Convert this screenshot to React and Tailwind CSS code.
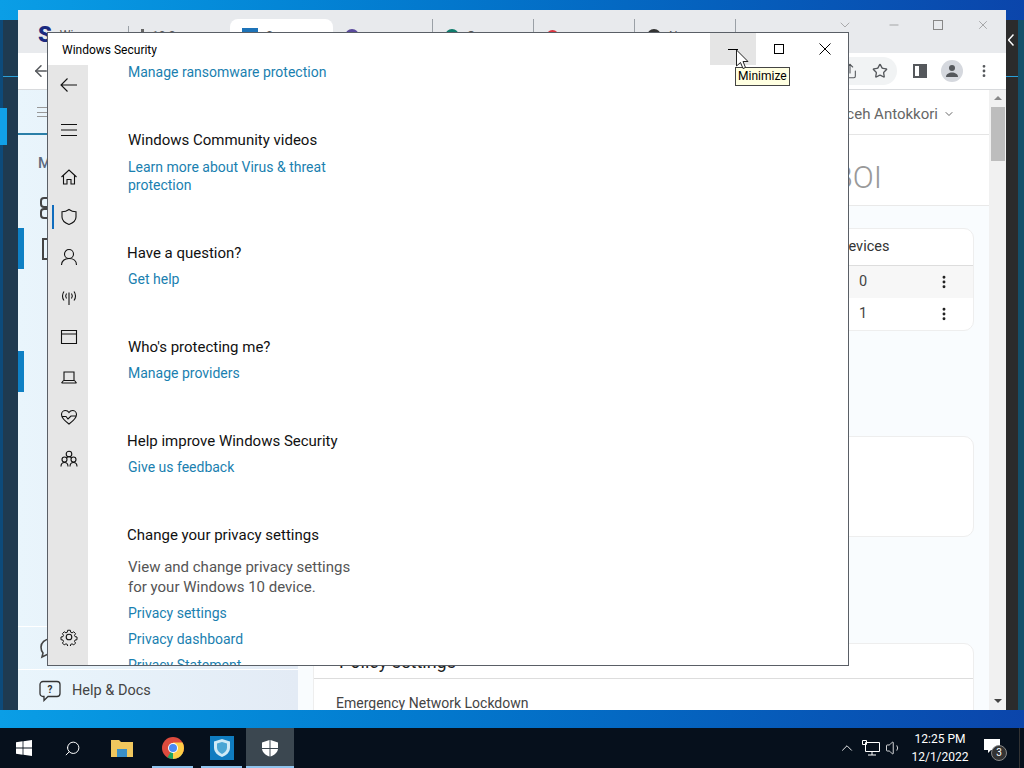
import React from 'react';
import { ArrowLeft, Search, Star, ChevronDown, EllipsisVertical, ChevronUp, X, Minus, Volume1, Share } from 'lucide-react';

const font = { fontFamily: 'Roboto, "Noto Sans", sans-serif' };

const Section = ({ title, children, className = '' }) => (
  <div className={className}>
    <div className="text-[15px] leading-[20px] text-[#111]">{title}</div>
    <div className="pt-[7px]">{children}</div>
  </div>
);

const LinkText = ({ children, className = '' }) => (
  <div className={`text-[14px] leading-[18px] text-[#1a7fb0] ${className}`}>{children}</div>
);

const NavIcon = ({ children, className = '' }) => (
  <div className={`relative flex h-[40px] w-full items-center justify-center pl-px ${className}`}>
    <svg width="18" height="18" viewBox="0 0 18 18" fill="none" stroke="#111" strokeWidth="1.1">{children}</svg>
  </div>
);

const SecurityNav = () => (
  <div className="flex w-[40px] shrink-0 flex-col bg-[#e6e6e6]">
    <NavIcon><path d="M17 9H1M7.500 2.500 1 9l6.500 6.500" /></NavIcon>
    <NavIcon className="mt-[5px]"><path d="M1 3.500H17M1 9H17M1 14.500H17" /></NavIcon>
    <NavIcon className="mt-[7px]"><path d="M1.500 9 9 2l7.500 7M3.500 7.500V16H7v-4.500h4V16h3.500V7.500" /></NavIcon>
    <div className="relative">
      <div className="absolute left-[4px] top-[8px] h-[24px] w-[2px] bg-[#0f6cbd]" />
      <NavIcon><path d="M9 1.500c2 1.500 4.500 2.300 7 2.300v5.200c0 3.500-3 6-7 7.500-4-1.500-7-4-7-7.500V3.800c2.500 0 5-.8 7-2.300z" /></NavIcon>
    </div>
    <NavIcon><circle cx="9" cy="6" r="4.500" /><path d="M1.500 17c0-4 3-6.500 7.500-6.500s7.500 2.500 7.500 6.500" /></NavIcon>
    <NavIcon><path d="M9 4.500V17M6.500 5.500c-1 1.500-1 3.500 0 5M11.500 5.500c1 1.500 1 3.500 0 5M4 3.500c-2 2.500-2 6.500 0 9M14 3.500c2 2.500 2 6.500 0 9" /></NavIcon>
    <NavIcon><path d="M1.500 2.500H16.500V15.500H1.500zM1.500 6H16.500" /></NavIcon>
    <NavIcon><path d="M4 4H14V12.500H4zM1.500 15H16.500M3.500 12.500 1.500 15M14.500 12.500l2 2.500" /></NavIcon>
    <NavIcon><path d="M9 16C5 13 1.500 10.500 1.500 6.500 1.500 4 3.500 2.500 5.500 2.500 7 2.500 8.200 3.300 9 4.500c.8-1.200 2-2 3.500-2 2 0 4 1.500 4 4 0 4-3.500 6.500-7.500 9.500zM2 8.500h4l2 2.500 3-3h5" /></NavIcon>
    <NavIcon className="mt-[2px]"><circle cx="9" cy="4" r="2.800" /><circle cx="4.500" cy="9.500" r="2.500" /><circle cx="13.500" cy="9.500" r="2.500" /><path d="M1 16.500c0-2.500 1.500-4 3.500-4s3.500 1.500 3.500 4M10 16.500c0-2.500 1.500-4 3.500-4s3.500 1.500 3.500 4M6.500 8c.6-.8 1.500-1.200 2.500-1.200s1.900.4 2.500 1.200" /></NavIcon>
    <NavIcon className="mb-[8px] mt-auto">
      <circle cx="9" cy="9" r="2.800" />
      <path d="M7.500 1.500h3l.4 2.200 1.500.7 1.900-1.200 2 2.100-1.200 1.800.6 1.500 2.200.4v3l-2.200.4-.6 1.500 1.200 1.800-2 2.100-1.900-1.200-1.500.6-.4 2.300h-3l-.4-2.300-1.500-.6-1.900 1.200-2-2.100 1.200-1.800-.6-1.500-2.200-.4v-3l2.200-.4.6-1.500-1.200-1.800 2-2.100 1.900 1.200 1.500-.7z" transform="translate(.9 .9) scale(.9)" />
    </NavIcon>
  </div>
);

const SecurityWindow = () => (
  <div className="absolute left-[47px] top-[32px] flex h-[634px] w-[802px] flex-col border border-[#5a5f66] bg-white">
    <div className="flex h-[32px] shrink-0 items-center justify-between">
      <span className="pl-[14px] pt-[2px] text-[12px] text-black">Windows Security</span>
      <div className="flex h-[32px]">
        <div className="flex w-[46px] items-center justify-center bg-[#e5e5e5]"><div className="h-px w-[10px] bg-black" /></div>
        <div className="flex w-[46px] items-center justify-center"><div className="size-[10px] border border-black" /></div>
        <div className="flex w-[46px] items-center justify-center">
          <svg width="12" height="12" viewBox="0 0 12 12" stroke="black"><path d="M.5.500l11 11M11.500.500l-11 11" /></svg>
        </div>
      </div>
    </div>
    <div className="flex min-h-0 flex-1">
      <SecurityNav />
      <div className="min-w-0 flex-1 overflow-hidden pl-[40px]">
        <LinkText className="-mt-[2px]">Manage ransomware protection</LinkText>
        <Section title="Windows Community videos" className="mt-[49px]">
          <LinkText className="mt-px w-[220px]">Learn more about Virus &amp; threat protection</LinkText>
        </Section>
        <Section title="Have a question?" className="-ml-px mt-[49px]">
          <LinkText className="ml-px">Get help</LinkText>
        </Section>
        <Section title="Who's protecting me?" className="mt-[49px]">
          <LinkText>Manage providers</LinkText>
        </Section>
        <Section title="Help improve Windows Security" className="-ml-px mt-[49px]">
          <LinkText className="ml-px">Give us feedback</LinkText>
        </Section>
        <div className="mt-[49px]">
          <div className="-ml-px text-[15px] leading-[20px] text-[#111]">Change your privacy settings</div>
          <div className="mt-[12px] w-[240px] text-[15px] leading-[20px] text-[#555]">View and change privacy settings for your Windows 10 device.</div>
          <LinkText className="mt-[7px]">Privacy settings</LinkText>
          <LinkText className="mt-[8px]">Privacy dashboard</LinkText>
          <LinkText className="mt-[8px]">Privacy Statement</LinkText>
        </div>
      </div>
    </div>
  </div>
);

const Tab = ({ w, icon, label, active, sep = true }) => (
  <div className={`flex shrink-0 items-center gap-[8px] pl-[12px] ${active ? 'rounded-t-[8px] bg-white' : ''} ${sep ? 'border-r border-[#9aa0a6]' : ''} ${w}`}>
    <div className={icon} />
    <span className="text-[12px] text-[#555]">{label}</span>
  </div>
);

const TabStrip = () => (
  <div className="flex h-[43px] shrink-0 items-start bg-[#e8eaed] text-[#777]">
    <div className="ml-[9px] mt-[9px] flex h-[34px]">
      <div className="flex w-[101px] shrink-0 items-start gap-[8px] pl-[11px] pt-[7px]">
        <span className="text-[22px] font-black leading-[18px] text-[#1a2a80]">S</span>
        <span className="text-[12px] text-[#555]">Wi</span>
      </div>
      <div className="mt-[7px] h-[27px] w-px bg-[#9aa0a6]" />
      <Tab w="w-[101px]" icon="h-[14px] w-[3px] bg-[#666]" label="10 S" sep={false} />
      <Tab w="w-[103px]" icon="size-[16px] bg-[#1d73b8]" label="S" active sep={false} />
      <Tab w="w-[100px]" icon="size-[14px] rounded-full bg-[#5a4a9c]" label="" />
      <Tab w="w-[101px]" icon="size-[14px] rounded-full bg-[#0f7b6c]" label="G" />
      <Tab w="w-[101px]" icon="size-[13px] rounded-full bg-[#d8343f]" label="" />
      <Tab w="w-[101px]" icon="size-[14px] rounded-full bg-[#333]" label="N" />
      <div className="pl-[20px] pt-[12px] text-[12px] text-[#555]">.</div>
    </div>
    <ChevronDown size={16} strokeWidth={1.2} className="ml-auto mr-[34px] mt-[7px] text-[#999]" />
    <Minus size={14} strokeWidth={1} className="mr-[32px] mt-[8px]" />
    <div className="mr-[33px] mt-[10px] size-[10px] border border-[#888]" />
    <X size={14} strokeWidth={1} className="mr-[16px] mt-[8px]" />
  </div>
);

const Toolbar = () => (
  <div className="flex h-[37px] shrink-0 items-center border-b border-[#d8dadd] pr-[14px] text-[#55585c]">
    <ArrowLeft size={18} strokeWidth={2} className="ml-[14px]" />
    <div className="ml-auto flex h-[28px] w-[100px] items-center justify-end rounded-r-full bg-[#f1f3f4] pr-[9px]">
      <Share size={16} strokeWidth={1.6} className="mr-[14px]" />
      <Star size={16} strokeWidth={2} />
    </div>
    <div className="ml-[16px] flex h-[14px] w-[14px] justify-end border-2 border-[#55585c]"><div className="w-[6px] bg-[#55585c]" /></div>
    <div className="ml-[14px] flex size-[22px] items-center justify-center rounded-full bg-[#d5d8de]">
      <svg width="14" height="14" viewBox="0 0 14 14" fill="#55585c"><circle cx="7" cy="4" r="3" /><path d="M1 13c0-3 3-4.500 6-4.500s6 1.500 6 4.500z" /></svg>
    </div>
    <EllipsisVertical size={16} strokeWidth={2.2} className="ml-[13px]" />
  </div>
);

const SideRow = ({ marker, children }) => (
  <div className="flex h-[41px] items-center">
    <div className={`h-full w-[6px] ${marker ? 'bg-[#0f80c4]' : ''}`} />
    {children}
  </div>
);

const Sidebar = () => (
  <div className="flex w-[280px] shrink-0 flex-col bg-gradient-to-r from-[#e9f5fc] to-[#e3ebf5]">
    <div className="flex h-[45px] items-start border-b-2 border-[#2a7fa8] pl-[19px] pt-[17px]">
      <div className="flex h-[10px] w-[14px] flex-col justify-between">
        <div className="h-px bg-[#999]" /><div className="h-px bg-[#999]" /><div className="h-px bg-[#999]" />
      </div>
    </div>
    <div className="h-[52px] pl-[20px] pt-[18px] text-[15px] font-medium leading-[20px] text-[#5d6b80]">Menu</div>
    <SideRow>
      <svg className="ml-[16px]" width="20" height="22" viewBox="0 0 20 22" fill="none" stroke="#444" strokeWidth="2"><rect x="1" y="1" width="9" height="9" rx="3" /><rect x="1" y="12" width="9" height="9" rx="3" /></svg>
    </SideRow>
    <SideRow marker>
      <svg className="ml-[16px]" width="20" height="22" viewBox="0 0 20 22" fill="none" stroke="#444" strokeWidth="2"><path d="M3 1h14v20H3zM7 7h8M7 11h8M7 15h8" /></svg>
    </SideRow>
    <SideRow />
    <SideRow />
    <SideRow marker />
    <div className="mt-auto flex h-[43px] items-center border-t border-white pl-[21px]">
      <svg width="22" height="22" viewBox="0 0 22 22" fill="none" stroke="#444" strokeWidth="1.600"><path d="M11 2c5 0 9 3.500 9 8s-4 8-9 8c-1 0-2-.1-3-.4L3 20l1-4C2.700 14.500 2 12.300 2 10c0-4.500 4-8 9-8z" /></svg>
    </div>
    <div className="flex h-[41px] items-center gap-[11px] border-t border-white pl-[21px] pt-[2px] text-[14.5px] text-[#444]">
      <svg width="22" height="22" viewBox="0 0 22 22" fill="none" stroke="#333" strokeWidth="1.300">
        <path d="M4 1.500h14a3 3 0 0 1 3 3v9a3 3 0 0 1-3 3H9l-4 4v-4H4a3 3 0 0 1-3-3v-9a3 3 0 0 1 3-3z" />
        <text x="11" y="13" textAnchor="middle" fontSize="10" fontWeight="700" fill="#333" stroke="none">?</text>
      </svg>
      Help &amp; Docs
    </div>
  </div>
);

const MainArea = () => (
  <div className="min-w-0 flex-1 bg-[#f9fcfe]">
    <div className="flex h-[45px] items-center justify-end border-b border-[#e5e5e5] bg-white pr-[34px] pt-[4px] text-[15px] text-[#666]">
      Aficeh Antokkori <ChevronDown size={12} className="ml-[5px]" />
    </div>
    <div className="flex h-[71px] items-center justify-end border-b border-[#e9e9e9] bg-white pr-[107px] pt-[16px] text-[31px] font-light text-[#999]">BOI</div>
    <div className="ml-auto mr-[15px] mt-[22px] w-[200px] overflow-hidden rounded-[10px] border border-[#eee] bg-white text-[14.5px] text-[#444]">
      <div className="flex h-[37px] items-center border-b border-[#ddd] pl-[64px] text-[#333]">Devices</div>
      <div className="flex h-[32px] items-center justify-between bg-[#f7f7f7] pl-[84px] pr-[21px]">0 <EllipsisVertical size={16} strokeWidth={2.4} className="text-[#222]" /></div>
      <div className="flex h-[32px] items-center justify-between pl-[84px] pr-[21px]">1 <EllipsisVertical size={16} strokeWidth={2.4} className="text-[#222]" /></div>
    </div>
    <div className="ml-auto mr-[15px] mt-[105px] h-[101px] w-[200px] rounded-[10px] border border-[#eee] bg-white" />
    <div className="mx-[15px] mt-[106px] rounded-t-[10px] border border-[#eee] bg-white">
      <div className="h-[35px] border-b border-[#ddd] pl-[25px] pt-[6px] text-[18px] leading-[24px] text-[#222]">Policy settings</div>
      <div className="pl-[22px] pt-[14px] text-[14px] text-[#444]">Emergency Network Lockdown</div>
    </div>
  </div>
);

const BrowserWindow = () => (
  <div className="absolute left-[18px] top-[10px] flex h-[700px] w-[988px] flex-col overflow-hidden bg-white">
    <TabStrip />
    <Toolbar />
    <div className="flex min-h-0 flex-1">
      <Sidebar />
      <MainArea />
      <div className="flex w-[17px] shrink-0 flex-col items-center bg-[#f1f1f1]">
        <div className="mt-[6px] h-0 w-0 border-x-[4px] border-b-[4px] border-x-transparent border-b-[#888]" />
        <div className="mt-[7px] h-[54px] w-[14px] bg-[#bdbdbd]" />
        <div className="mb-[7px] mt-auto h-0 w-0 border-x-[4px] border-t-[4px] border-x-transparent border-t-[#444]" />
      </div>
    </div>
  </div>
);

const Underline = () => <div className="absolute inset-x-[4px] bottom-0 h-[2px] bg-[#8fc4ee]" />;

const Taskbar = () => (
  <div className="absolute inset-x-0 bottom-0 flex h-[40px] items-stretch bg-[#06101c] text-white">
    <div className="flex w-[48px] items-center justify-center">
      <svg width="16" height="16" viewBox="0 0 16 16" fill="white"><path d="M0 2.200 6.600 1.300v6.300H0zM7.400 1.200 16 0v7.600H7.400zM0 8.400h6.600v6.300L0 13.800zM7.400 8.400H16V16l-8.600-1.200z" /></svg>
    </div>
    <div className="flex w-[48px] items-center justify-center"><Search size={17} strokeWidth={1.4} className="-scale-x-100" /></div>
    <div className="flex w-[52px] items-center justify-center">
      <svg width="22" height="18" viewBox="0 0 22 18"><path d="M0 1h8l2 2h12v15H0z" fill="#f0c75e" /><path d="M6 10h10v8H6z" fill="#3a8fc7" /></svg>
    </div>
    <div className="relative flex w-[49px] items-center justify-center">
      <svg width="22" height="22" viewBox="0 0 22 22">
        <circle cx="11" cy="11" r="11" fill="#dd4b3e" />
        <path d="M11 11 L20.500 16.500 A11 11 0 0 1 5.500 20.500 Z" fill="#1da462" />
        <path d="M11 5.500h9.500A11 11 0 0 1 11 22z" fill="#ffcd46" />
        <circle cx="11" cy="11" r="5" fill="white" />
        <circle cx="11" cy="11" r="4" fill="#4a8af4" />
      </svg>
      <Underline />
    </div>
    <div className="relative flex w-[49px] items-center justify-center">
      <div className="flex size-[24px] items-center justify-center bg-[#0f7cc0]">
        <svg width="16" height="18" viewBox="0 0 16 18"><path d="M8 0l8 2.500v6C16 13 12.500 16.500 8 18 3.500 16.500 0 13 0 8.500v-6z" fill="#cfeaf6" /><path d="M8 3l5 1.600v4C13 11.500 11 13.500 8 15 5 13.500 3 11.500 3 8.600v-4z" fill="#4ba6d4" /></svg>
      </div>
      <Underline />
    </div>
    <div className="relative flex w-[48px] items-center justify-center bg-[#3b4750]">
      <svg width="18" height="18" viewBox="0 0 18 18" fill="white"><path d="M8.500 1 1 3.500V9h7.500zM9.500 1V9H17V3.500zM1 10c.5 3.500 3.500 6 7.500 7.500V10zM9.500 10v7.500C13.500 16 16.500 13.500 17 10z" /></svg>
      <div className="absolute inset-x-0 bottom-0 h-[2px] bg-[#8fc4ee]" />
    </div>
    <div className="ml-auto flex items-center">
      <ChevronUp size={18} strokeWidth={1.2} />
      <svg className="ml-[6px]" width="18" height="16" viewBox="0 0 18 16" fill="none" stroke="white"><path d="M3.500 2.500H17.500V11.500H3.500zM10 11.500V15M6 15H14M.5.500h4v4h-4z" fill="#06101c" /></svg>
      <Volume1 size={18} strokeWidth={1.1} className="ml-[5px]" />
      <div className="ml-[8px] w-[58px] text-center text-[12px] leading-[18px]">
        <div>12:25 PM</div>
        <div>12/1/2022</div>
      </div>
      <div className="relative -mt-[4px] ml-[15px] mr-[24px]">
        <svg width="16" height="15" viewBox="0 0 16 15" fill="white"><path d="M0 0h16v11H7l-3 3v-3H0z" /></svg>
        <div className="absolute left-[7px] top-[6px] flex size-[16px] items-center justify-center rounded-full border border-[#888] bg-[#333] text-[10px]">3</div>
      </div>
      <div className="absolute right-[4px] top-0 h-full w-px bg-[#333]" />
    </div>
  </div>
);

export default function App() {
  return (
    <div className="relative h-[768px] w-[1024px] overflow-hidden bg-gradient-to-r from-[#0a9ee6] to-[#0b45ab]" style={font}>
      <div className="absolute left-0 top-[20px] h-[690px] w-[18px] border-l-[3px] border-[#0d4a7a] bg-[#1f3a50]">
        <div className="mt-[56px] h-px bg-[#2a9fd8]" />
        <div className="-ml-[3px] mt-[31px] h-[37px] w-[7px] bg-[#11a0e8]" />
      </div>
      <div className="absolute right-0 top-[20px] h-[690px] w-[18px] border-r-[6px] border-[#14506a] bg-[#2b2b2b]">
        <svg className="ml-[2px] mt-[14px]" width="6" height="12" viewBox="0 0 6 12" fill="none" stroke="white" strokeWidth="1.500"><path d="M5.500.500 .5 6l5 5.500" /></svg>
        <div className="mt-[30px] h-px bg-[#2a9fd8]" />
      </div>
      <BrowserWindow />
      <SecurityWindow />
      <div className="absolute left-[735px] top-[67px] border border-[#444] bg-[#ffffe1] px-[2px] text-[12px] leading-[17px] text-black">Minimize</div>
      <svg className="absolute left-[735px] top-[49px]" width="14" height="22" viewBox="0 0 14 22" fill="white" stroke="#222"><path d="M1.500 1v16l4-3.500 2.500 6 2.500-1-2.500-6h5z" /></svg>
      <Taskbar />
    </div>
  );
}
